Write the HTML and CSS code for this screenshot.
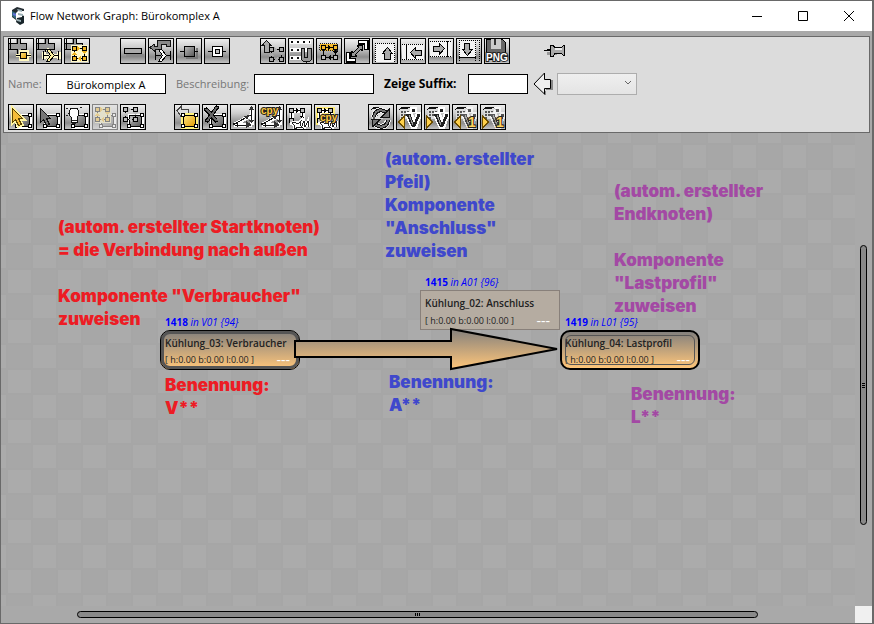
FILE: index.html
```
<!DOCTYPE html>
<html lang="de">
<head>
<meta charset="utf-8">
<title>Flow Network Graph: Bürokomplex A</title>
<link rel="stylesheet" href="styles.css">
</head>
<body>
<svg class="defs" aria-hidden="true">
  <defs>
    <linearGradient id="gold" x1="0" y1="0" x2="1" y2="1"><stop offset="0" stop-color="#ffe680"/><stop offset="1" stop-color="#e09a00"/></linearGradient>
    <linearGradient id="steel" x1="0" y1="0" x2="1" y2="1"><stop offset="0" stop-color="#bbb"/><stop offset="1" stop-color="#555"/></linearGradient>
    <linearGradient id="sand" x1="0" y1="0" x2="0" y2="1"><stop offset="0" stop-color="#83807d"/><stop offset="1" stop-color="#ffc67a"/></linearGradient>
    <g id="plus"><path d="M7 0h5v5h6v6h-6v6H7v-6H0V5h7z" fill="#999"/><path d="M0 10.500h8.500v6h3M1.500 0v10M8.500 0v4.500M11.500 0v4.500h6v6h-6M0 4.500h8" fill="none" stroke="#000"/></g>
    <g id="flow"><path d="M6.500 13v7M6 16.500h16M21.500 13v7M10 10l6 6-6 6" fill="none" stroke="#fffbd0" stroke-width="4"/><path d="M6.500 12v9M6 16.500h6M17 16.500h4M21.500 12v9" fill="none" stroke="#000"/><path d="M9.500 10.500h3l5 6-5 6h-3l4-6z" fill="#fff3a0" stroke="#000"/></g>
    <g id="graph"><path d="M10.500 10.500h10v10h-10z" fill="none" stroke="#000"/><path d="M13 8l3 2.500-3 2.500zM18 13h5l-2.500 3zM17 18l-3 2.500 3 2.500zM8 17h5l-2.500-3z"/><path d="M8.500 8.500h4v4h-4zM18.500 8.500h4v4h-4zM8.500 18.500h4v4h-4zM18.500 18.500h4v4h-4z" stroke="#000"/></g>
    <g id="node"><path d="M8.500 10.500h12v11h-12z" fill="none" stroke="#fff" stroke-width="4"/><path d="M8.500 10.500h12v11h-12z" stroke="#000"/><path d="M19.500 8.500h3v3h-3zM6.500 19.500h3v3h-3zM19.500 19.500h3v3h-3z" fill="#fff" stroke="#000"/></g>
    <path id="cursor" d="M3.500 3.500v14l3-3 3 6 3-1-3-6h4z"/>
    <g id="sheet"><path d="M3 4l4-3h7v13H3z" fill="#ddd"/><path d="M2 5l4-3h6l3 3M5 3h6" fill="none" stroke="#111"/><path d="M4 6h2v2H4zM7 6h2v2H7zM10 6h2v2h-2zM4 9h2v2H4zM7 9h2v2H7zM4 12h2v2H4z" fill="#555"/></g>
    <g id="vdot"><path d="M10 8h5l2 8 3-8h3v4l-4 11h-4l-5-11zM14 3h5v4h-5z" fill="#fff" stroke="#fff" stroke-width="2"/><path d="M9 9h5v2l3 7 3-7v-2h3v2l-5 11h-3l-5-11H9z" fill="#222"/><path d="M12 10l4 10" stroke="#999" fill="none"/><path d="M15 4h3v3h-3z" fill="#222"/></g>
    <g id="spread"><path d="M3 20l18-10M3 20h18M20.500 3v17" stroke="#fff" stroke-width="4" fill="none"/><path d="M2 19l4-1v3zM3 19l17-9M5 20.500h14M20.500 4v13" stroke="#111" fill="none"/><path d="M20.500 1l-3 4h6zM20.500 18l-3-3h6zM13 11l6-1-3 5zM15 16l6 4-6 3z" fill="#333"/></g>
    <g id="minigraph"><path d="M5 6h11v12H5z" fill="none" stroke="#fff" stroke-width="4"/><path d="M4.500 5.500h11v9M4.500 5.500v11" fill="none" stroke="#000"/><path d="M2.500 3.500h4v4h-4zM13.500 3.500h4v4h-4zM2.500 13.500h4v4h-4z" fill="#bbb" stroke="#000"/><path d="M9 3l3 2.500L9 8zM13 11h5l-2.500 3z"/></g>
    <g id="brush"><path d="M7 17l4 2 3-3-1 4 3 3-5-1-4 3 1-4-3-3zM14 23l3-7 1 6 3-6 1 6" fill="none" stroke="#fff" stroke-width="3"/><path d="M7 17l4 2 3-3-1 4 3 3-5-1-4 3 1-4-3-3zM14 23l3-7 1 6 3-6 1 6" fill="none" stroke="#222"/></g>
  </defs>
</svg>

<div class="window">
  <header class="titlebar">
    <svg class="app-icon" viewBox="0 0 16 18"><path d="M2 3l5-3 7 2v2L8 4 6 6v7l-4-3z" fill="#242c32"/><path d="M2 4l4 2v6L2 9z" fill="#356b80"/><path d="M3 6l3 1v2L3 8z" fill="#6570dd"/><path d="M7 11l5-1v-2l2 1v7l-4 2-4-3z" fill="#18252a"/><path d="M7 2l5 1v2L8 4zM7 12l4 1v2l-4-1zM8 6l5 1v2L8 8z" fill="#9aafb5"/></svg>
    <h1 class="title">Flow Network Graph: Bürokomplex A</h1>
    <button class="caption" aria-label="Minimieren"><svg viewBox="0 0 12 12"><path d="M1 6.500h10" stroke="#000"/></svg></button>
    <button class="caption" aria-label="Maximieren"><svg viewBox="0 0 12 12"><path d="M1.500 1.500h9v9h-9z" fill="none" stroke="#000"/></svg></button>
    <button class="caption" aria-label="Schließen"><svg viewBox="0 0 12 12"><path d="M1 1l10 10M11 1L1 11" stroke="#000"/></svg></button>
  </header>

  <section class="tools">
    <div class="row">
      <div class="group">
        <button class="tool" aria-label="Knoten anlegen"><svg viewBox="0 0 24 24"><use href="#plus"/><path d="M7 16.500h15" stroke="#fff8c0" stroke-width="3"/><path d="M11 12h7v8h-7z" fill="none" stroke="#fff8c0" stroke-width="3"/><path d="M7 16.500h15" stroke="#000"/><path d="M11.500 13.500h6v6h-6z" fill="url(#gold)" stroke="#000"/></svg></button>
        <button class="tool" aria-label="Pfeil anlegen"><svg viewBox="0 0 24 24"><use href="#plus"/><use href="#flow"/></svg></button>
        <button class="tool" aria-label="Netz anlegen"><svg viewBox="0 0 24 24"><use href="#plus"/><path d="M6 6h17v17H6z" fill="#fff8c8"/><use href="#graph" x="-1" y="-1" fill="#eeb422"/></svg></button>
      </div>
      <div class="group">
        <button class="tool" aria-label="Balken"><svg viewBox="0 0 24 24"><path d="M5 15h18v3H5z" fill="#888"/><path d="M3.500 9.500h17v5h-17z" fill="#aaa" stroke="#000"/></svg></button>
        <button class="tool" aria-label="Umleiten"><svg viewBox="0 0 24 24"><path d="M1 8.500l4-3v2h3v-6h13v6h-4v-2h-5v5H6v2z" fill="#888" stroke="#111"/><path d="M6.500 12v9M6 16.500h6M17 16.500h4M21.500 12v9" fill="none" stroke="#000"/><path d="M9.500 10.500h3l5 6-5 6h-3l4-6z" fill="#fff" stroke="#000"/></svg></button>
        <button class="tool" aria-label="Gefüllter Knoten"><svg viewBox="0 0 24 24"><path d="M9 19h11V9" stroke="#777" stroke-width="2" fill="none"/><path d="M3 12.500h18" stroke="#000"/><path d="M7.500 7.500h10v10h-10z" fill="url(#steel)" stroke="#000"/></svg></button>
        <button class="tool" aria-label="Rahmenknoten"><svg viewBox="0 0 24 24"><path d="M3 12.500h18" stroke="#000"/><path d="M7.500 7.500h10v10h-10z" fill="#fff" stroke="#000"/><path d="M10.500 10.500h4v4h-4z" fill="#bbb" stroke="#000"/></svg></button>
      </div>
      <div class="group">
        <button class="tool" aria-label="Hochschieben"><svg viewBox="0 0 24 24"><path d="M5.500 1.500L1 6.500h2v7h5v-7h2z" fill="#aaa" stroke="#111"/><use href="#graph" fill="#aaa"/></svg></button>
        <button class="tool" aria-label="Am Raster fangen"><svg viewBox="0 0 24 24"><path d="M1 3h21M1 11h21M1 19h14" stroke="#fff" stroke-width="4"/><path d="M2 3h19M2 11h19M2 19h15" stroke="#111" stroke-width="2" stroke-dasharray="2 4"/><path d="M12.500 9.500h3v8c0 2 3 2 3 0v-8h4v9c0 6-10 6-10 0z" fill="#999" stroke="#111"/></svg></button>
        <button class="tool" aria-label="Ausrichten"><svg viewBox="0 0 24 24"><path d="M2.500 4.500h18v7h-18z" fill="#f4b92c" stroke="#222" stroke-dasharray="1 1"/><path d="M6.500 8.500h12v10h-12z" fill="none" stroke="#000"/><path d="M4.500 6.500h4v4h-4zM16.500 6.500h4v4h-4z" fill="#f4b92c" stroke="#000"/><path d="M4.500 16.500h4v4h-4zM16.500 16.500h4v4h-4z" fill="#bbb" stroke="#000"/><path d="M11 6l3 2.500-3 2.500zM14 16l-3 2.500 3 2.500zM16 12h5l-2.500 3z"/></svg></button>
        <button class="tool" aria-label="Einpassen"><svg viewBox="0 0 24 24"><path d="M13 3h8v8M3 13v8h8" fill="none" stroke="#000" stroke-width="5"/><path d="M14 3h7v7M3 14v7h7" fill="none" stroke="#fff" stroke-width="2"/><path d="M17.500 6.500v5l-2-1-5 5 1 2h-5v-5l2 1 5-5-1-2z" fill="#999" stroke="#000"/></svg></button>
        <button class="tool" aria-label="Nach oben"><svg viewBox="0 0 24 24"><path d="M2 4h20v19H2z" fill="#f4f4f4"/><path d="M2 4.500h20M2.500 4v19M21.500 4v19" fill="none" stroke="#000" stroke-dasharray="1 1"/><path d="M14.500 8.500l-5 6h2v6h6v-6h2z" fill="#aaa" stroke="#000"/></svg></button>
        <button class="tool" aria-label="Nach links"><svg viewBox="0 0 24 24"><path d="M1 5h22v16H1z" fill="#f4f4f4"/><path d="M1 5.500h22M1 20.500h22" stroke="#000" stroke-dasharray="1 1"/><path d="M5.500 5v16" stroke="#000"/><path d="M9.500 13.500l5-5v3h6v5h-6v3z" fill="#aaa" stroke="#000"/></svg></button>
        <button class="tool" aria-label="Nach rechts"><svg viewBox="0 0 24 24"><path d="M1 2h22v16H1z" fill="#f4f4f4"/><path d="M1 2.500h22M1 17.500h22" stroke="#000" stroke-dasharray="1 1"/><path d="M18.500 2v16" stroke="#000"/><path d="M15.500 9.500l-5-5v3h-6v5h6v3z" fill="#aaa" stroke="#000"/></svg></button>
        <button class="tool" aria-label="Nach unten"><svg viewBox="0 0 24 24"><path d="M2 2h17v17H2z" fill="#f4f4f4"/><path d="M2.500 1v22M18.500 1v22M22.500 1v22M2 1.500h20" stroke="#000" fill="none" stroke-dasharray="1 1"/><path d="M2 18.500h17" stroke="#000"/><path d="M10.500 16.500l5-6h-3v-6h-5v6h-2z" fill="#aaa" stroke="#000"/></svg></button>
        <button class="tool" aria-label="Als PNG speichern"><svg viewBox="0 0 24 24"><path d="M1.500.5h16l3 3v17h-19z" fill="#666" stroke="#000"/><path d="M6 0h10v10H6z" fill="#ccc"/><path d="M9 0h2v6H9z" fill="#333"/><text class="png" x="1" y="22">PNG</text></svg></button>
      </div>
      <button class="plain pin" aria-label="Anheften"><svg viewBox="0 0 22 16"><path d="M3 9h10v3H8l-2 2v-2H3z" fill="#999"/><path d="M0 7.500h8M3 6.500h4" stroke="#000"/><path d="M6.500 2.500h3l1 2h7l2-2h1v10h-1l-2-2h-7l-1 3h-3z" fill="#aaa" stroke="#000"/><path d="M11 5h7v2h-7z" fill="#eee"/></svg></button>
    </div>

    <form class="row fields">
      <label class="muted name" for="name">Name:</label>
      <input class="wide" id="name" value="Bürokomplex A">
      <label class="muted desc" for="desc">Beschreibung:</label>
      <input class="wide" id="desc">
      <label class="suffix" for="suffix">Zeige Suffix:</label>
      <input class="small" id="suffix">
      <button class="plain back" type="button" aria-label="Übernehmen"><svg viewBox="0 0 20 24"><path d="M12 19v4M13 17h6V8" fill="none" stroke="#888" stroke-width="2"/><path d="M1 12L11.500 1v6.500h6v9h-6V22z" fill="#eee" stroke="#000"/></svg></button>
      <div class="pick"><select aria-label="Suffix wählen"><option></option></select><svg viewBox="0 0 8 6"><path d="M1 1l3 3 3-3" fill="none" stroke="#666"/></svg></div>
    </form>

    <div class="row low">
      <div class="group">
        <button class="tool" aria-label="Auswählen"><svg viewBox="0 0 24 24"><use href="#node" fill="url(#steel)"/><use href="#cursor" fill="none" stroke="#fff5a0" stroke-width="4"/><use href="#cursor" fill="#f5bd38" stroke="#5c4300"/></svg></button>
        <button class="tool" aria-label="Auswahl aufheben"><svg viewBox="0 0 24 24"><use href="#node" fill="url(#steel)"/><use href="#cursor" fill="#777" stroke="#111"/></svg></button>
        <button class="tool" aria-label="Hervorheben"><svg viewBox="0 0 24 24"><use href="#node" fill="url(#steel)"/><path d="M9 3c-6 0-6 7-3 9v5h6v-5c3-2 3-9-3-9z" fill="#fff" stroke="#111"/><path d="M7 15h5M7 18h4M1 3l2 1M15 3l2-1M1 11l2-1M15 10l2 1" stroke="#222"/></svg></button>
        <button class="tool" aria-label="Netz auswählen" disabled><svg viewBox="0 0 24 24"><use href="#node" fill="url(#steel)"/><path d="M2 2h16v16H2z" fill="#eee8b0"/><use href="#graph" x="-6" y="-6" fill="#eeb422"/></svg></button>
        <button class="tool" aria-label="Alles auswählen"><svg viewBox="0 0 24 24"><use href="#node" fill="url(#steel)"/><use href="#graph" x="-6" y="-6" fill="#bbb"/></svg></button>
      </div>
      <div class="group">
        <button class="tool" aria-label="Knoten zuweisen"><svg viewBox="0 0 24 24"><path d="M2 5.500l4-4v3h7v4H6v3z" fill="#ddd" stroke="#444"/><path d="M8 10h13v12H8z" fill="none" stroke="#fff27b" stroke-width="4"/><path d="M8.500 10.500h12v11h-12z" fill="url(#gold)" stroke="#000"/><path d="M6.500 8.500h3v3h-3zM19.500 8.500h3v3h-3zM6.500 19.500h3v3h-3zM19.500 19.500h3v3h-3z" fill="#fff" stroke="#000"/></svg></button>
        <button class="tool" aria-label="Zuweisung löschen"><svg viewBox="0 0 24 24"><use href="#node" fill="url(#steel)"/><path d="M2 3l12 14M15 1L3 17" stroke="#000" stroke-width="4"/><path d="M3 4l11 12M14 2L4 16" stroke="#666" stroke-width="2"/></svg></button>
        <button class="tool" aria-label="Verbindungen"><svg viewBox="0 0 24 24"><use href="#spread"/></svg></button>
        <button class="tool" aria-label="Verbindungen kopieren"><svg viewBox="0 0 24 24"><use href="#spread"/><text class="cpy" x="2" y="9">cpy</text></svg></button>
        <button class="tool" aria-label="Format"><svg viewBox="0 0 24 24"><use href="#minigraph"/><use href="#brush"/></svg></button>
        <button class="tool" aria-label="Format kopieren"><svg viewBox="0 0 24 24"><path d="M4 5h12v11H4z" fill="none" stroke="#ffec78" stroke-width="7"/><use href="#minigraph"/><use href="#brush"/><text class="cpy" x="5" y="16">cpy</text></svg></button>
      </div>
      <div class="group">
        <button class="tool" aria-label="Neu berechnen"><svg viewBox="0 0 24 24"><use href="#sheet"/><path d="M5 12c1-8 9-8 13-4M19 15c-1 8-9 8-13 4" fill="none" stroke="#eee" stroke-width="6"/><path d="M5 12c1-8 9-8 13-4M19 15c-1 8-9 8-13 4" fill="none" stroke="#111" stroke-width="4"/><path d="M5 12c1-8 9-8 13-4M19 15c-1 8-9 8-13 4" fill="none" stroke="#777" stroke-width="2"/><path d="M20.500 4v8h-8zM3 14.500h8l-7 7z" fill="#777" stroke="#111"/></svg></button>
        <button class="tool" aria-label="Volumenstrom zurück"><svg viewBox="0 0 24 24"><use href="#sheet"/><use href="#vdot"/><path d="M1.500 17l6-6v12z" fill="#ffd04a" stroke="#6a4c00"/></svg></button>
        <button class="tool" aria-label="Volumenstrom vor"><svg viewBox="0 0 24 24"><use href="#sheet"/><use href="#vdot"/><path d="M7.500 17l-6-6v12z" fill="#ffd04a" stroke="#6a4c00"/></svg></button>
        <button class="tool" aria-label="Volumenstrom 1 zurück"><svg viewBox="0 0 24 24"><use href="#sheet"/><use href="#vdot" opacity=".7"/><path d="M1.500 17l6-6v12z" fill="#ffd04a" stroke="#6a4c00"/><text class="one" x="15" y="22">1</text></svg></button>
        <button class="tool" aria-label="Volumenstrom 1 vor"><svg viewBox="0 0 24 24"><use href="#sheet"/><use href="#vdot" opacity=".7"/><path d="M7.500 17l-6-6v12z" fill="#ffd04a" stroke="#6a4c00"/><text class="one" x="15" y="22">1</text></svg></button>
      </div>
    </div>
  </section>

  <main class="workspace">
    <div class="canvas">
      <p class="note start">(autom. erstellter Startknoten)<br>= die Verbindung nach außen<br><br>Komponente "Verbraucher"<br>zuweisen</p>
      <p class="note edge">(autom. erstellter<br>Pfeil)<br>Komponente<br>"Anschluss"<br>zuweisen</p>
      <p class="note end">(autom. erstellter<br>Endknoten)<br><br>Komponente<br>"Lastprofil"<br>zuweisen</p>
      <p class="note start-code">Benennung:<br>V**</p>
      <p class="note edge-code">Benennung:<br>A**</p>
      <p class="note end-code">Benennung:<br>L**</p>

      <article class="item item-start">
        <p class="tag"><b>1418</b> <i>in V01 {94}</i></p>
        <div class="box dark"><h2>Kühlung_03: Verbraucher</h2><p>[ h:0.00 b:0.00 l:0.00 ]<span>---</span></p></div>
      </article>
      <article class="item item-edge">
        <p class="tag"><b>1415</b> <i>in A01 {96}</i></p>
        <div class="box flat"><h2>Kühlung_02: Anschluss</h2><p>[ h:0.00 b:0.00 l:0.00 ]<span>---</span></p></div>
      </article>
      <svg class="arrow" viewBox="0 0 266 44"><path d="M2 14H158V2L264 22L158 42V30H2Z" fill="url(#sand)" stroke="#000" stroke-width="2"/></svg>
      <article class="item item-end">
        <p class="tag"><b>1419</b> <i>in L01 {95}</i></p>
        <div class="box inset"><h2>Kühlung_04: Lastprofil</h2><p>[ h:0.00 b:0.00 l:0.00 ]<span>---</span></p></div>
      </article>
    </div>
    <div class="track vertical"><div class="thumb"><i></i></div></div>
    <div class="track horizontal"><div class="thumb"><i></i></div></div>
    <div class="corner"></div>
  </main>
</div>
</body>
</html>
```
FILE: styles.css
```
* { box-sizing: border-box; }

body {
  margin: 0;
  font: 11px/16px "Open Sans", "Noto Sans", sans-serif;
  color: #000;
}

h1, h2, p { margin: 0; font-size: inherit; font-weight: inherit; }
button { padding: 0; font: inherit; }
svg { display: block; }
.defs { position: absolute; width: 0; height: 0; }

.window {
  display: flex;
  flex-direction: column;
  height: 100vh;
  border: 1px solid #696969;
  border-right-width: 2px;
  background: #a9a9a9;
}

/* Title bar */
.titlebar {
  display: flex;
  align-items: center;
  flex: none;
  height: 30px;
  background: #fff;
}
.app-icon { width: 16px; height: 18px; margin: 0 4px 0 9px; }
.title { flex: 1; }
.caption {
  display: grid;
  place-items: center;
  width: 46px;
  height: 30px;
  border: 0;
  background: none;
}
.caption svg { width: 12px; height: 12px; }

/* Tool panel */
.tools {
  flex: none;
  margin: 5px 2px 0;
  padding: 1px 4px 2px;
  border: 1px solid #696969;
  background: #dcdcdc;
}
.row { display: flex; align-items: center; gap: 30px; }
.low { gap: 28px; }
.group { display: flex; gap: 2px; }
.tool {
  width: 26px;
  height: 26px;
  border: 1px solid #000;
  background: linear-gradient(#eee, #ccc 35%, #8c8c8c 75%, #c4c4c4);
}
.tool svg { width: 24px; height: 24px; overflow: hidden; shape-rendering: crispEdges; }
.tool:disabled { opacity: 0.4; }
.plain { border: 0; background: none; }
.pin { margin-left: 4px; }
.pin svg { width: 22px; height: 16px; shape-rendering: crispEdges; }
.png, .cpy, .one {
  font-family: "Liberation Sans", sans-serif;
  font-weight: 700;
  stroke: #222;
  stroke-width: 2px;
  paint-order: stroke;
}
.png { font-size: 10px; fill: #fff; }
.cpy { font-size: 10px; fill: #ffc83c; }
.one { font-size: 14px; fill: #ffd25a; }

/* Field row */
.fields { height: 40px; gap: 0; }
.muted { color: #777; }
.name { width: 38px; }
.desc { width: 78px; margin-left: 10px; }
.suffix { width: 84px; margin-left: 10px; font-size: 12px; font-weight: 700; }
.fields input {
  height: 20px;
  padding: 0;
  border: 1px solid #000;
  border-radius: 0;
  background: #fff;
  font: inherit;
  text-align: center;
}
.fields .wide { width: 120px; }
.fields .small { width: 60px; }
.back { margin: 0 4px 0 5px; }
.back svg { width: 20px; height: 24px; }
.pick { position: relative; }
.pick select {
  display: block;
  width: 80px;
  height: 22px;
  border: 1px solid #adadad;
  border-radius: 0;
  background: linear-gradient(#efefef, #e4e4e4);
  appearance: none;
}
.pick svg { position: absolute; right: 5px; top: 7px; width: 8px; height: 6px; pointer-events: none; }

/* Drawing area */
.workspace {
  display: grid;
  flex: 1;
  grid-template-columns: 1fr 17px;
  grid-template-rows: 1fr 17px;
  min-height: 0;
}
.canvas {
  position: relative;
  overflow: hidden;
  background:
    linear-gradient(90deg, #a6a6a6 2px, transparent 0) 5px 0 / 25px 25px,
    linear-gradient(#a6a6a6 2px, transparent 0) 0 10px / 25px 25px,
    conic-gradient(#ababab 25%, #a7a7a7 0 50%, #ababab 0 75%, #a7a7a7 0) 6px 11px / 50px 50px;
}

.note {
  position: absolute;
  font: 900 17px/23px Inter, "Liberation Sans", sans-serif;
  white-space: nowrap;
}
.start, .start-code { color: #ed1c24; }
.edge, .edge-code { color: #3f48cc; }
.end, .end-code { color: #a349a4; }
.start { left: 57px; top: 83px; }
.edge { left: 384px; top: 15px; }
.end { left: 613px; top: 47px; }
.start-code { left: 164px; top: 241px; }
.edge-code { left: 388px; top: 238px; }
.end-code { left: 630px; top: 250px; }

.item { position: absolute; width: 140px; font-size: 9px; line-height: 14px; white-space: nowrap; }
.item-start { left: 159px; top: 182px; }
.item-edge { left: 419px; top: 142px; }
.item-end { left: 559px; top: 182px; }
.tag { padding-left: 5px; color: #00f; font-size: 10px; }
.box { position: relative; height: 40px; margin-top: 1px; color: #222; }
.box h2 { font-size: 10px; font-weight: 600; }
.box p { display: flex; justify-content: space-between; margin-top: 3px; padding-right: 5px; }
.box span { color: #fff; font-size: 14px; font-weight: 400; }
.dark, .inset {
  border: 2px solid #000;
  border-radius: 10px;
  padding: 4px 3px;
  background: linear-gradient(#83807d, #ffc67a);
}
.dark { border-width: 1px; padding: 5px 4px; box-shadow: inset 0 0 0 3px #555; }
.inset::after {
  content: "";
  position: absolute;
  inset: 3px;
  border: 1px solid #555;
  border-radius: 6px;
}
.flat { padding: 5px 4px; border: 1px solid #88807a; background: #b5aca1; }
.flat p { margin-top: 4px; }
.arrow { position: absolute; left: 292px; top: 194px; width: 266px; height: 44px; }

/* Scroll bars */
.track { display: flex; }
.vertical { justify-content: center; padding: 112px 0 81px; }
.horizontal { align-items: center; padding: 0 97px 0 76px; }
.thumb {
  display: grid;
  place-items: center;
  border: 1px solid #000;
  border-radius: 4px;
  background: #898989;
}
.vertical .thumb { width: 7px; }
.horizontal .thumb { flex: 1; height: 7px; }
.thumb i { width: 5px; height: 3px; background: repeating-linear-gradient(90deg, #000 0 1px, transparent 1px 2px); }
.vertical .thumb i { width: 3px; height: 5px; background: repeating-linear-gradient(#000 0 1px, transparent 1px 2px); }
.corner { background: #f0f0f0; }
```
